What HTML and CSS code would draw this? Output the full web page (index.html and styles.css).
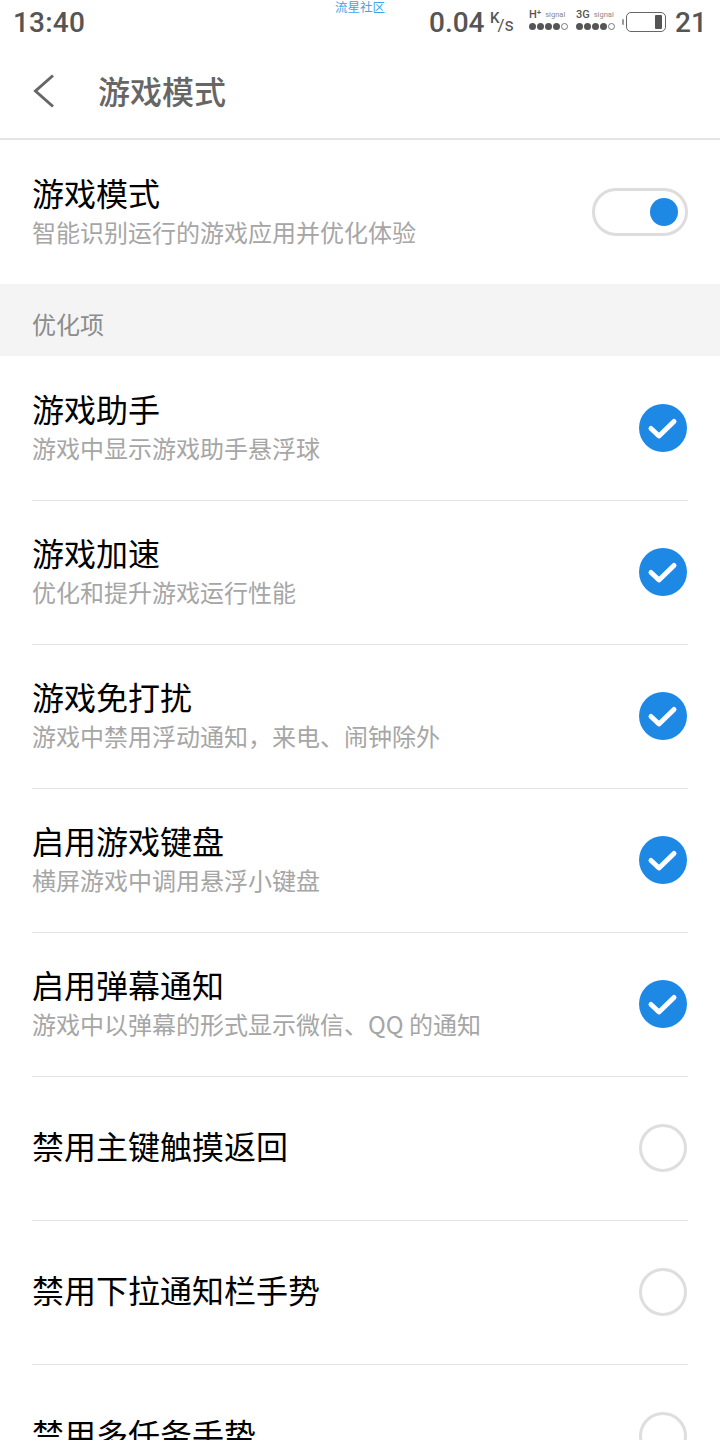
FILE: index.html
```html
<!DOCTYPE html>
<html lang="zh-CN">
<head>
<meta charset="utf-8">
<title>游戏模式</title>
<link rel="stylesheet" href="styles.css">
</head>
<body>
<div class="page">
  <div class="status">
    <span class="clock">13:40</span>
    <span class="brand">流星社区</span>
    <div class="status-right">
      <span class="speed">0.04</span>
      <span class="unit"><span class="unit-k">K</span><span class="unit-slash">/</span><span class="unit-s">s</span></span>
      <div class="sim sim-a">
        <div class="sim-top"><b>H⁺</b><i>signal</i></div>
        <div class="dots"><u></u><u></u><u></u><u></u><s></s></div>
      </div>
      <div class="sim">
        <div class="sim-top"><b>3G</b><i>signal</i></div>
        <div class="dots"><u></u><u></u><u></u><u></u><s></s></div>
      </div>
      <span class="battery-nub"></span>
      <div class="battery"><span class="battery-level"></span></div>
      <span class="battery-num">21</span>
    </div>
  </div>
  <header class="nav">
    <svg class="back" width="24" height="36" viewBox="0 0 24 36"><path d="M21 2.500 L3.500 18 L21 33.500" fill="none" stroke="#666" stroke-width="3"/></svg>
    <h1 class="nav-title">游戏模式</h1>
  </header>
  <div class="row row-top">
    <div class="text">
      <div class="title">游戏模式</div>
      <div class="sub">智能识别运行的游戏应用并优化体验</div>
    </div>
    <div class="switch"><span class="knob"></span></div>
  </div>
  <div class="section">优化项</div>
  <div class="list">
    <div class="row item">
      <div class="text"><div class="title">游戏助手</div><div class="sub">游戏中显示游戏助手悬浮球</div></div>
      <svg class="check" viewBox="0 0 48 48"><circle cx="24" cy="24" r="24" fill="#1e88e5"/><path d="M12 24.500 L20 32 L35 17.500" fill="none" stroke="#fff" stroke-width="5" stroke-linecap="round" stroke-linejoin="round"/></svg>
    </div>
    <div class="row item">
      <div class="text"><div class="title">游戏加速</div><div class="sub">优化和提升游戏运行性能</div></div>
      <svg class="check" viewBox="0 0 48 48"><circle cx="24" cy="24" r="24" fill="#1e88e5"/><path d="M12 24.500 L20 32 L35 17.500" fill="none" stroke="#fff" stroke-width="5" stroke-linecap="round" stroke-linejoin="round"/></svg>
    </div>
    <div class="row item">
      <div class="text"><div class="title">游戏免打扰</div><div class="sub">游戏中禁用浮动通知，来电、闹钟除外</div></div>
      <svg class="check" viewBox="0 0 48 48"><circle cx="24" cy="24" r="24" fill="#1e88e5"/><path d="M12 24.500 L20 32 L35 17.500" fill="none" stroke="#fff" stroke-width="5" stroke-linecap="round" stroke-linejoin="round"/></svg>
    </div>
    <div class="row item">
      <div class="text"><div class="title">启用游戏键盘</div><div class="sub">横屏游戏中调用悬浮小键盘</div></div>
      <svg class="check" viewBox="0 0 48 48"><circle cx="24" cy="24" r="24" fill="#1e88e5"/><path d="M12 24.500 L20 32 L35 17.500" fill="none" stroke="#fff" stroke-width="5" stroke-linecap="round" stroke-linejoin="round"/></svg>
    </div>
    <div class="row item">
      <div class="text"><div class="title">启用弹幕通知</div><div class="sub">游戏中以弹幕的形式显示微信、QQ 的通知</div></div>
      <svg class="check" viewBox="0 0 48 48"><circle cx="24" cy="24" r="24" fill="#1e88e5"/><path d="M12 24.500 L20 32 L35 17.500" fill="none" stroke="#fff" stroke-width="5" stroke-linecap="round" stroke-linejoin="round"/></svg>
    </div>
    <div class="row item">
      <div class="text single"><div class="title">禁用主键触摸返回</div></div>
      <span class="radio"></span>
    </div>
    <div class="row item">
      <div class="text single"><div class="title">禁用下拉通知栏手势</div></div>
      <span class="radio"></span>
    </div>
    <div class="row item">
      <div class="text single"><div class="title">禁用多任务手势</div></div>
      <span class="radio"></span>
    </div>
  </div>
</div>
</body>
</html>
```
FILE: styles.css
```css
* { box-sizing: border-box; }
html, body { margin: 0; padding: 0; background: #fff; }
body { font-family: "Noto Sans CJK SC", "Noto Sans", sans-serif; }
.page { width: 720px; height: 1440px; overflow: hidden; }

.status { height: 46px; display: flex; align-items: flex-start; position: relative; padding: 1px 14px 0 13px; color: #555; font-family: Roboto, "Noto Sans CJK SC", sans-serif; }
.clock { font-size: 28px; line-height: 44px; font-weight: 500; letter-spacing: 0.2px; }
.brand { position: absolute; left: 335px; top: 0; font-size: 12.500px; line-height: 14px; color: #3fa4ea; font-family: "Noto Sans CJK SC", sans-serif; }
.status-right { margin-left: auto; display: flex; align-items: flex-start; }
.speed { font-size: 28px; line-height: 44px; font-weight: 500; width: 61px; }
.unit { width: 39px; height: 34px; display: flex; align-items: flex-start; font-size: 15px; line-height: 16px; }
.unit-k { font-weight: 500; margin-top: 9px; }
.unit-slash { font-size: 17px; line-height: 18px; margin: 15px 0 0 -2px; }
.unit-s { font-size: 18px; line-height: 18px; margin: 15px 0 0 0; }
.sim { width: 41px; margin-left: 6px; padding-top: 7px; }
.sim-a { margin-left: 0; }
.sim-top { height: 14px; display: flex; gap: 4px; align-items: center; white-space: nowrap; }
.sim-top b { font-size: 11px; font-weight: 500; line-height: 14px; }
.sim-top i { font-size: 7.500px; font-style: normal; color: #888; line-height: 14px; }
.dots { display: flex; gap: 1px; margin-top: 1px; }
.dots u, .dots s { width: 7px; height: 7px; border-radius: 50%; background: #555; display: block; }
.dots s { background: #fff; border: 1px solid #777; }
.battery-nub { width: 2px; height: 6px; margin: 18px 0 0 5px; background: #999; border-radius: 1px; }
.battery { width: 40px; height: 20px; margin: 11px 0 0 2px; border: 1px solid #666; border-radius: 5px; display: flex; justify-content: flex-end; padding: 2px 3px 2px 0; }
.battery-level { width: 7px; background: #555; border-radius: 1px; }
.battery-num { font-size: 28px; line-height: 44px; font-weight: 500; margin-left: 9px; width: 31px; }

.nav { height: 94px; border-bottom: 2px solid #e4e4e4; display: flex; align-items: center; padding: 0 0 2px 32px; }
.back { display: block; }
.nav-title { margin: 0 0 2px 42px; font-size: 32px; font-weight: 500; line-height: 44px; color: #666; }

.row { display: flex; align-items: center; justify-content: space-between; margin: 0 32px; }
.row-top { height: 144px; }
.text { display: flex; flex-direction: column; padding-bottom: 2px; }
.text.single { padding-bottom: 4px; }
.title { font-size: 32px; line-height: 40px; color: #000; margin-bottom: 2px; }
.sub { font-size: 24px; line-height: 36px; color: #a6a6a6; }

.switch { width: 96px; height: 48px; border: 3px solid #dedcdc; border-radius: 24px; display: flex; align-items: center; justify-content: flex-end; padding-right: 7px; }
.knob { width: 28px; height: 28px; border-radius: 50%; background: #1e88e5; }

.section { height: 72px; background: #f4f4f4; padding-left: 32px; font-size: 24px; line-height: 80px; color: #8c8c8c; }

.list { padding-top: 1px; }
.item { height: 144px; border-bottom: 1px solid #e4e4e4; padding-bottom: 1px; }
.check { width: 48px; height: 48px; flex: none; display: block; margin-right: 1px; }
.radio { width: 48px; height: 48px; flex: none; border: 3px solid #dedede; border-radius: 50%; margin-right: 1px; }
```
